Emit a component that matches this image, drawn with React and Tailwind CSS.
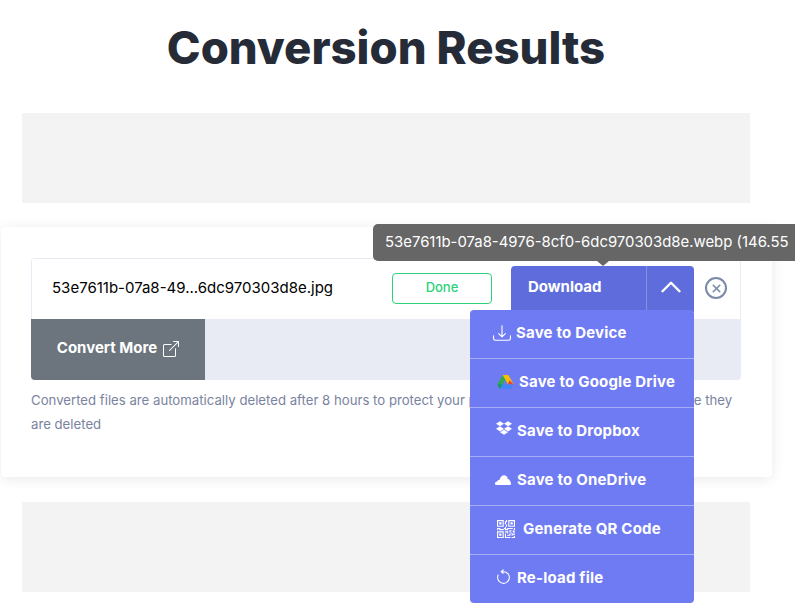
import { ChevronUp, X } from "lucide-react";
import React from "react";
import { BsArrowCounterclockwise, BsBoxArrowUpRight, BsDownload, BsQrCode } from "react-icons/bs";
import { FaDropbox } from "react-icons/fa";

const FONT = { fontFamily: '"Inter", "Noto Sans", sans-serif' };

const DriveIcon = () => (
  <svg viewBox="0 0 18 16" className="w-[17px] h-[16px]">
    <path d="M6 0.5h6L6.2 10.5H0.3z" fill="#34a853" />
    <path d="M6 0.5h6l5.7 10h-6z" fill="#fbbc04" />
    <path d="M5.8 10.5h11.9l-3 5H2.9z" fill="#4285f4" />
    <path d="M0.3 10.5h5.5L2.9 15.5z" fill="#0f9d58" />
    <path d="M13 6.2l4.7 4.3h-6z" fill="#ea4335" />
  </svg>
);

const CloudIcon = () => (
  <svg viewBox="0 0 24 15" fill="currentColor" className="w-[16px] h-[10px]">
    <path d="M2.5 15C1 15 0 14 0 12.6c0-1.6 1.2-2.8 3-2.9.6-1.6 2-2.5 3.6-2.3C8 3 10.6.3 13.6.3c2.4 0 4.4 1.4 5.4 4-.5 0-1.2.3-1.800.7 3-.4 6.800 4.500 6.800 8 0 1-.6 2-2 2z" />
  </svg>
);

const menuItems = [
  { label: "Save to Device", icon: <BsDownload className="w-[18px] h-[18px]" />, pad: "pl-[23px]", gap: "gap-[5px]", height: "h-[49px]" },
  { label: "Save to Google Drive", icon: <DriveIcon />, pad: "pl-[27px]", gap: "gap-[5px]", height: "h-[49px]" },
  { label: "Save to Dropbox", icon: <FaDropbox className="w-[16px] h-[16px] -translate-y-[3px]" />, pad: "pl-[26px]", gap: "gap-[5px]", height: "h-[49px]" },
  { label: "Save to OneDrive", icon: <CloudIcon />, pad: "pl-[25px]", gap: "gap-[6px]", height: "h-[49px]" },
  { label: "Generate QR Code", icon: <BsQrCode className="w-[18px] h-[18px]" />, pad: "pl-[27px]", gap: "gap-[8px]", height: "h-[49px]" },
  { label: "Re-load file", icon: <BsArrowCounterclockwise className="w-[17px] h-[17px] -translate-y-[1px]" />, pad: "pl-[25px]", gap: "gap-[5px]", height: "h-[48px]" },
];

const App = () => {
  return (
    <div className="relative w-[795px] h-[609px] overflow-hidden bg-white" style={FONT}>
      <div className="w-[772px]">
        <h1 className="h-[113px] pt-[18px] text-center text-[45.5px] leading-[60px] font-extrabold text-[#252b37]">
          Conversion Results
        </h1>
        <div className="mx-[22px] h-[90px] bg-[#f3f3f3]"></div>

        {/* Result card */}
        <div className="relative mt-[24px] ml-[1px] h-[250px] rounded bg-white pl-[30px] pr-[31px] pt-[31px] shadow-[0_2px_14px_rgba(0,0,0,0.09)]">
          <div className="rounded overflow-hidden">
            <div className="flex items-center h-[61px] border border-b-0 border-[#e8ebf3] bg-white">
              <span className="ml-[20px] w-[340px] pb-[2px] text-[15px] text-black">
                53e7611b-07a8-49...6dc970303d8e.jpg
              </span>
              <span className="flex items-center justify-center w-[100px] h-[31px] mb-[2px] rounded border border-[#2dd17b] text-[13px] font-medium text-[#2dd17b]">
                Done
              </span>
            </div>
            <div className="h-[61px] bg-[#e8ebf3]">
              <a className="flex items-center justify-center gap-[6px] w-[174px] h-full pb-[2px] bg-[#6c757d] text-[15px] font-bold text-white">
                Convert More
                <BsBoxArrowUpRight className="w-[16px] h-[16px]" />
              </a>
            </div>
          </div>
          <p className="mt-[8px] text-[13.2px] leading-[24px] text-[#7a83a0]">
            Converted files are automatically deleted after 8 hours to protect your privacy. Please download files before they
            are deleted
          </p>
        </div>

        <div className="mx-[22px] mt-[25px] h-[90px] bg-[#f3f3f3]"></div>
      </div>

      {/* Download button */}
      <div className="absolute left-[511px] top-[266px] flex w-[183px] h-[46px] rounded-t bg-[#5f6ddc] text-white">
        <span className="flex-1 pl-[17px] pt-[10px] text-[15px] leading-[22px] font-bold">Download</span>
        <span className="flex justify-center w-[48px] pt-[4px] border-l border-[#8590e4]">
          <ChevronUp className="w-[34px] h-[34px]" strokeWidth={1.7} />
        </span>
      </div>

      {/* Remove button */}
      <span className="absolute left-[705px] top-[277px] flex items-center justify-center w-[22px] h-[22px] rounded-full border-2 border-[#7a8aa6] text-[#7a8aa6]">
        <X className="w-[13px] h-[13px]" strokeWidth={3} />
      </span>

      {/* Tooltip */}
      <div className="absolute left-[373px] top-[224px] w-[422px] h-[37px] rounded-l-[5px] bg-[#666666] pl-[12px] text-[14.9px] leading-[37px] whitespace-nowrap text-white">
        53e7611b-07a8-4976-8cf0-6dc970303d8e.webp (146.55
      </div>
      <div className="absolute left-[597px] top-[261px] w-0 h-0 border-x-[6px] border-x-transparent border-t-[5px] border-t-[#666666]"></div>

      {/* Dropdown menu */}
      <div className="absolute left-[470px] top-[310px] w-[224px] rounded-b rounded-t-sm bg-[#6f7bf2] text-white divide-y divide-[#a6aef8]">
        {menuItems.map((item) => (
          <div key={item.label} className={`flex items-center ${item.height} pb-[2px] ${item.pad} ${item.gap} text-[15px] tracking-[0.2px] font-bold`}>
            {item.icon}
            <span>{item.label}</span>
          </div>
        ))}
      </div>
    </div>
  );
};

export default App;
